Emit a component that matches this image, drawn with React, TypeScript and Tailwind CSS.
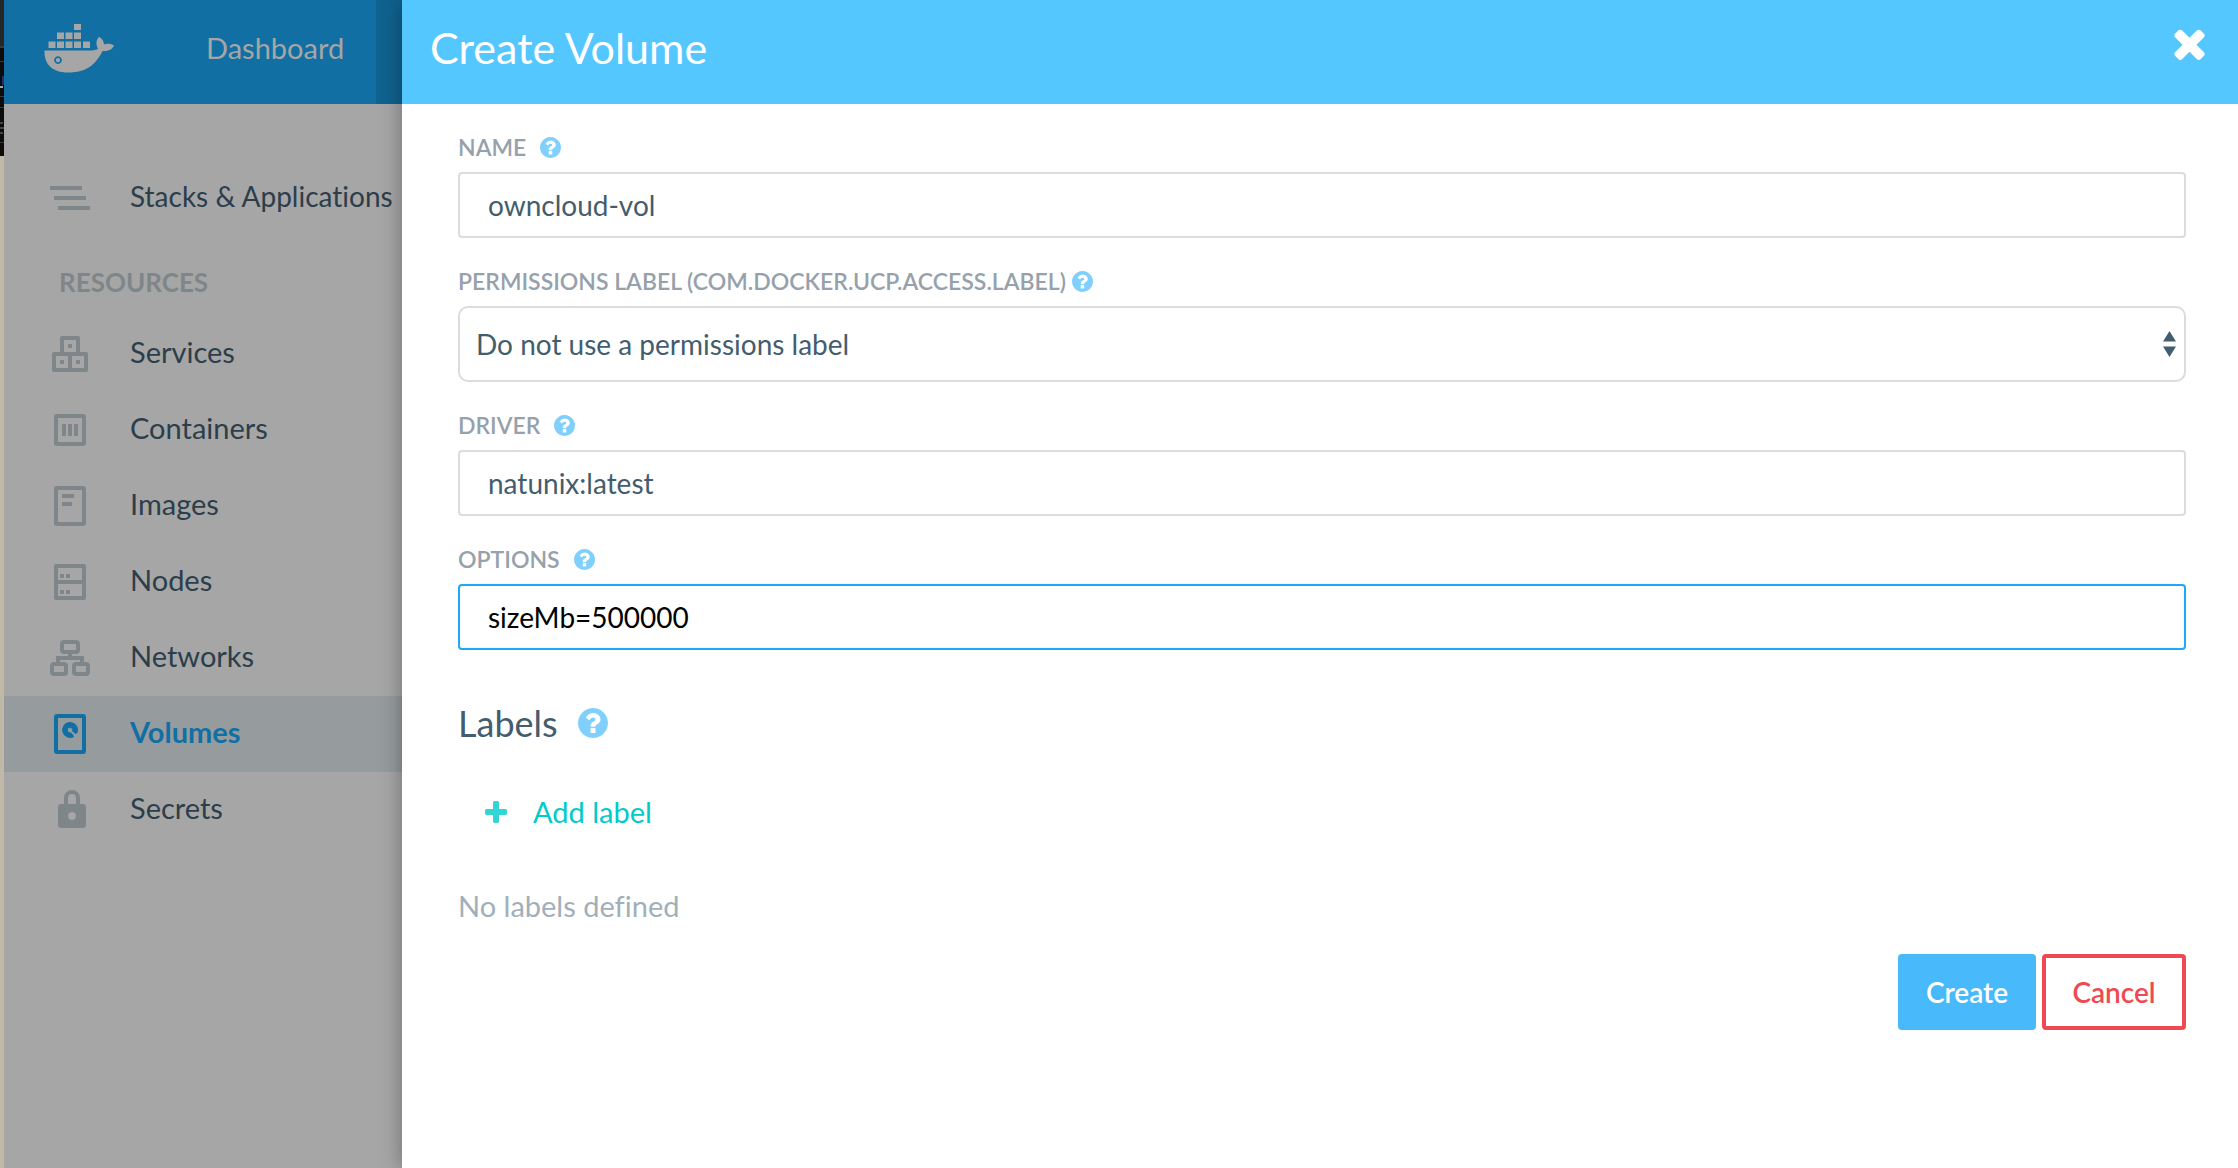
import React, { useState } from 'react';
import type { ReactNode } from 'react';

const QUESTION_PATH =
  'M1024 1376v-192q0-14-9-23t-23-9h-192q-14 0-23 9t-9 23v192q0 14 9 23t23 9h192q14 0 23-9t9-23zm256-672q0-88-55.5-163t-138.5-116-170-41q-243 0-371 213-15 24 8 42l132 100q7 6 19 6 16 0 25-12 53-68 86-92 34-24 86-24 48 0 85.5 26t37.5 59q0 38-20 61t-68 45q-63 28-115.5 86.5t-52.5 125.5v36q0 14 9 23t23 9h192q14 0 23-9t9-23q0-19 21.5-49.5t54.5-49.5q32-18 49-28.5t46-35 44.5-48 28-60.5 12.5-81zm384 192q0 209-103 385.5t-279.5 279.5-385.5 103-385.5-103-279.5-279.5-103-385.5 103-385.5 279.5-279.5 385.5-103 385.5 103 279.5 279.5 103 385.5z';
const TIMES_PATH =
  'M1490 1322q0 40-28 68l-136 136q-28 28-68 28t-68-28l-294-294-294 294q-28 28-68 28t-68-28l-136-136q-28-28-28-68t28-68l294-294-294-294q-28-28-28-68t28-68l136-136q28-28 68-28t68 28l294 294 294-294q28-28 68-28t68 28l136 136q28 28 28 68t-28 68l-294 294 294 294q28 28 28 68z';
const PLUS_PATH =
  'M1600 736v192q0 40-28 68t-68 28h-416v416q0 40-28 68t-68 28h-192q-40 0-68-28t-28-68v-416h-416q-40 0-68-28t-28-68v-192q0-40 28-68t68-28h416v-416q0-40 28-68t68-28h192q40 0 68 28t28 68v416h416q40 0 68 28t28 68z';

const DockerLogo = () => (
  <svg viewBox="0 0 70 50" className="h-[50px] w-[70px]" fill="currentColor" aria-label="Docker">
    <path d="M30 1h7v6h-7zM13 9.500h7v6.500h-7zM21.500 9.500h7v6.500h-7zM30 9.500h7v6.500h-7zM4.500 18.500h7v6.500h-7zM13 18.500h7v6.500h-7zM21.500 18.500h7v6.500h-7zM30 18.500h7v6.500h-7zM39 18.500h7v6.500h-7z" />
    <path
      fillRule="evenodd"
      d="M0.500 27.500H46c4 0 6.500-.6 8-1.800-2.500-4.500-1.800-9.200 1.200-12 3 2 5 5 4.800 7.800 3.500-1.200 7-.8 10 1-1.800 4-5.500 5.800-11.500 5.500C52 41 43 49.500 24 49.500 8 49.500 0 41 0.500 27.500zM14 33.200a3.900 3.900 0 1 0 .01 0zM14 35a2.100 2.100 0 1 1-.01 0z"
    />
  </svg>
);

const Box = ({ children }: { children: ReactNode }) => (
  <svg viewBox="0 0 40 40" className="h-10 w-10 shrink-0" fill="currentColor" aria-hidden="true">
    {children}
  </svg>
);

const outline = { fill: 'none', stroke: 'currentColor', strokeWidth: 4 };

const StacksIcon = (
  <Box>
    <path d="M0 10h32v4H0zM4 20h32v4H4zM8 30h32v4H8z" />
  </Box>
);

const resources = [
  {
    name: 'Services',
    icon: (
      <Box>
        <path {...outline} strokeLinejoin="round" d="M12 20V4h16v16M4 20h32v16H4zM20 20v16" />
        <path d="M18 10h4v4h-4zM10 26h4v4h-4zM26 26h4v4h-4z" />
      </Box>
    ),
  },
  {
    name: 'Containers',
    icon: (
      <Box>
        <rect {...outline} x="6" y="6" width="28" height="28" rx="1" />
        <path d="M12 14h4v12h-4zM18 14h4v12h-4zM24 14h4v12h-4z" />
      </Box>
    ),
  },
  {
    name: 'Images',
    icon: (
      <Box>
        <rect {...outline} x="6" y="2" width="28" height="36" rx="1" />
        <path d="M12 8h12v4H12zM12 16h10v4H12z" />
      </Box>
    ),
  },
  {
    name: 'Nodes',
    icon: (
      <Box>
        <path {...outline} strokeLinejoin="round" d="M6 4h28v32H6zM8 20h24" />
        <path d="M10 12h4v4h-4zM16 12h4v4h-4zM10 28h4v4h-4zM16 28h4v4h-4z" />
      </Box>
    ),
  },
  {
    name: 'Networks',
    icon: (
      <Box>
        <rect {...outline} x="12" y="4" width="16" height="10" rx="2" />
        <rect {...outline} x="2" y="26" width="14" height="10" rx="2" />
        <rect {...outline} x="24" y="26" width="14" height="10" rx="2" />
        <path {...outline} d="M20 15v5M8 25v-5h24v5" />
      </Box>
    ),
  },
  {
    name: 'Volumes',
    icon: (
      <Box>
        <rect {...outline} x="6" y="2" width="28" height="36" rx="1" />
        <path
          fillRule="evenodd"
          d="M20 8a8 8 0 0 1 7.400 11L25.500 20 22 17a2.200 2.200 0 1 0-1.500 1.200L23 20.500l.5 1L24 23a8 8 0 1 1-4-15z"
        />
      </Box>
    ),
  },
  {
    name: 'Secrets',
    icon: (
      <Box>
        <path {...outline} d="M16 16V8a6 6 0 0 1 12 0v8" />
        <path
          fillRule="evenodd"
          d="M11 14h22q3 0 3 3v18q0 3-3 3H11q-3 0-3-3V17q0-3 3-3zM22 22a4 4 0 1 0 .01 0z"
        />
      </Box>
    ),
  },
];

const Help = ({ large = false }: { large?: boolean }) => (
  <button type="button" aria-label="Help" className="text-[#7fd0ff]">
    <svg
      viewBox="128 128 1536 1536"
      className={large ? 'h-[30px] w-[30px]' : 'h-[21px] w-[21px]'}
      fill="currentColor"
    >
      <path d={QUESTION_PATH} />
    </svg>
  </button>
);

interface FieldProps {
  id: string;
  label: string;
  tight?: boolean;
  children: ReactNode;
}

const Field = ({ id, label, tight = false, children }: FieldProps) => (
  <div>
    <div className={`mb-2.5 flex h-[30px] items-center ${tight ? 'gap-1.5' : 'gap-3.5'}`}>
      <label htmlFor={id} className="text-[23px] font-semibold uppercase text-[#96a1ac]">
        {label}
      </label>
      <Help />
    </div>
    {children}
  </div>
);

const inputClass =
  'block h-[66px] w-full rounded border-2 border-[#dcdcdc] bg-white px-7 text-[28px] text-[#445d6e] outline-none';

const App: React.FC = () => {
  const [name, setName] = useState('owncloud-vol');
  const [driver, setDriver] = useState('natunix:latest');
  const [options, setOptions] = useState('sizeMb=500000');

  return (
    <div className="flex min-h-screen overflow-hidden bg-white font-[Lato,'Open_Sans',sans-serif] [font-variant-ligatures:none]">
      {/* sliver of the window behind */}
      <div className="w-1 shrink-0 bg-[#c0b9a8]">
        <svg viewBox="0 0 4 156" className="h-[156px] w-1" aria-hidden="true">
          <path fill="#0c0b0a" d="M0 0h4v156H0z" />
          <path fill="#262626" d="M0 0h4v46H0z" />
          <path fill="#3a3a3a" d="M0 46h4v2H0zM0 61h4v1H0zM0 96h4v1H0zM0 107h4v1H0zM0 142h4v1H0z" />
          <path fill="#1f3270" d="M2 76h2v9H2z" />
          <path fill="#a6a6a6" d="M0 86h3v2H0z" />
          <path fill="#444" d="M0 122h3v2H0zM0 127h4v2H0zM0 132h3v2H0z" />
        </svg>
      </div>

      <div className="w-[398px] shrink-0 bg-[#a6a6a6]">
        <header className="flex h-[104px] bg-[#126fa3] text-[#a6a6a6]">
          <a href="#home" className="pl-10 pt-[23px]">
            <DockerLogo />
          </a>
          <a href="#dashboard" className="pt-7 pl-[92px] text-[29px] leading-10">
            Dashboard
          </a>
          <div className="ml-auto w-[26px] bg-[#10628f]" />
        </header>

        <nav className="pt-[54px] text-[#2c3e4b]">
          <a href="#stacks" className="flex h-[76px] items-center gap-10 pl-[46px] text-[28px]">
            <span className="text-[#7f868a]">{StacksIcon}</span>
            <span className="whitespace-nowrap">Stacks &amp; Applications</span>
          </a>
          <h2 className="h-[82px] pt-7 pl-[55px] text-[26px] leading-10 font-bold text-[#7f868a]">
            RESOURCES
          </h2>
          {resources.map((r) => {
            const active = r.name === 'Volumes';
            return (
              <a
                key={r.name}
                href={`#${r.name.toLowerCase()}`}
                className={`flex h-[76px] items-center gap-10 pl-[46px] text-[29px] ${active ? 'bg-[#969b9e] font-bold text-[#126fa3]' : ''}`}
              >
                <span className={active ? '' : 'text-[#7f868a]'}>{r.icon}</span>
                <span className="pb-1">{r.name}</span>
              </a>
            );
          })}
        </nav>
      </div>

      <main className="relative min-w-0 flex-1 bg-white shadow-[0_0_20px_rgba(0,0,0,0.35)]">
        <header className="flex h-[104px] justify-between bg-[#55c7ff] pr-[33px] pl-7 text-white">
          <h1 className="pt-5 text-[43px] leading-14">Create Volume</h1>
          <button type="button" aria-label="Close" className="mt-7 self-start">
            <svg viewBox="302 302 1188 1252" className="h-8 w-[31px]" fill="currentColor">
              <path d={TIMES_PATH} />
            </svg>
          </button>
        </header>

        <form className="pt-7 pr-[52px] pl-14" onSubmit={(e) => e.preventDefault()}>
          <div className="flex flex-col gap-7">
            <Field id="name" label="Name">
              <input id="name" className={inputClass} value={name} onChange={(e) => setName(e.target.value)} />
            </Field>

            <Field id="permissions" label="Permissions label (com.docker.ucp.access.label)" tight>
              <div className="relative">
                <select
                  id="permissions"
                  className="block h-[76px] w-full appearance-none rounded-[10px] border-2 border-[#dcdcdc] bg-white px-4 text-[28px] text-[#445d6e] outline-none"
                >
                  <option>Do not use a permissions label</option>
                </select>
                <svg
                  viewBox="0 0 13 26"
                  className="pointer-events-none absolute top-[25px] right-[10px] h-[26px] w-[13px]"
                  fill="#445d6e"
                >
                  <path d="M6.500 0L13 10.500H0zM6.500 26L13 15.500H0z" />
                </svg>
              </div>
            </Field>

            <Field id="driver" label="Driver">
              <input id="driver" className={inputClass} value={driver} onChange={(e) => setDriver(e.target.value)} />
            </Field>

            <Field id="options" label="Options">
              <input
                id="options"
                className="block h-[66px] w-full rounded border-2 border-[#1fa8f8] bg-white px-7 text-[28px] text-black outline-none"
                value={options}
                onChange={(e) => setOptions(e.target.value)}
              />
            </Field>
          </div>

          <div className="mt-12 flex h-[50px] items-center gap-5">
            <h2 className="text-[36px] text-[#445d6e]">Labels</h2>
            <Help large />
          </div>

          <button type="button" className="mt-10 ml-[27px] flex h-12 items-center gap-[26px] text-[29px] text-[#00cbca]">
            <svg viewBox="192 128 1408 1408" className="h-[22px] w-[22px] text-[#33d6d5]" fill="currentColor">
              <path d={PLUS_PATH} />
            </svg>
            Add label
          </button>

          <p className="mt-[46px] text-[29px] leading-12 text-[#a1afba]">No labels defined</p>

          <div className="mt-6 flex justify-end gap-1.5 pb-10 text-[28px] font-semibold">
            <button type="submit" className="h-[76px] w-[138px] rounded bg-[#48b9fb] text-white">
              Create
            </button>
            <button type="button" className="h-[76px] w-36 rounded border-4 border-[#ef4a53] bg-white text-[#ef4a53]">
              Cancel
            </button>
          </div>
        </form>
      </main>
    </div>
  );
};

export default App;
